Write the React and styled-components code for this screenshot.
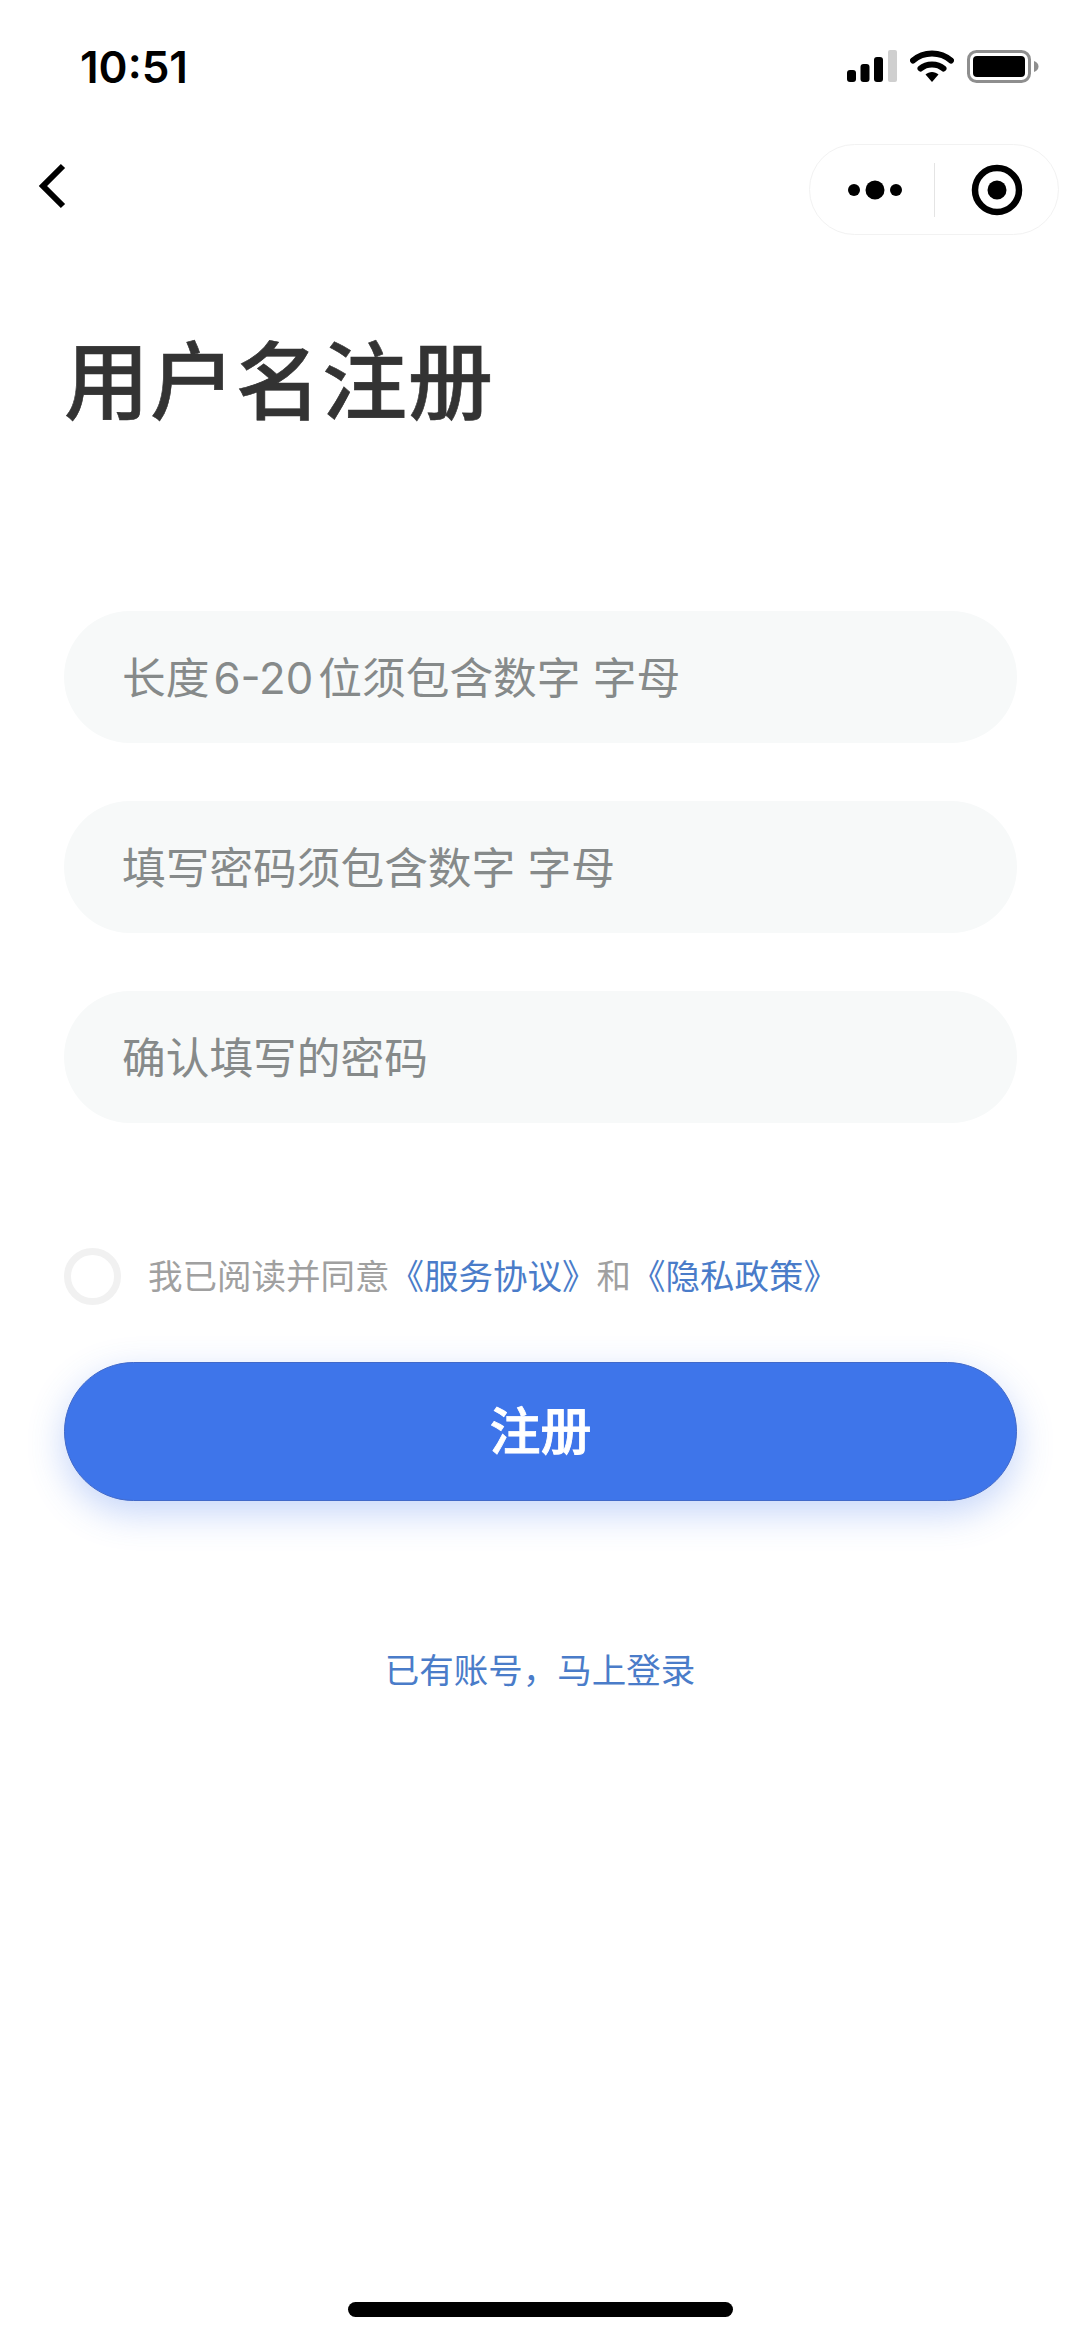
import React from 'react'
import styled, { createGlobalStyle } from 'styled-components'

const cjk = `Inter, "Noto Sans CJK SC", sans-serif`

const Global = createGlobalStyle`
  html, body { margin: 0; padding: 0; background: #fff; }
  * { box-sizing: border-box; }
`

const Page = styled.div`
  width: 1080px;
  height: 2339px;
  display: flex;
  flex-direction: column;
  background: #fff;
  font-family: ${cjk};
  overflow: hidden;
`

const StatusBar = styled.div`
  height: 134px;
  padding: 41px 41px 0 80px;
  display: flex;
  align-items: flex-start;
  justify-content: space-between;
`

const Time = styled.div`
  font-size: 44px;
  line-height: 52px;
  font-weight: 600;
  color: #000;
`

const StatusIcons = styled.div`
  display: flex;
  align-items: center;
  gap: 13px;
  padding-top: 8px;
`

const NavBar = styled.div`
  height: 111px;
  padding: 10px 21px 0 38px;
  display: flex;
  align-items: flex-start;
  justify-content: space-between;
`

const Back = styled.svg`
  width: 30px;
  height: 48px;
  margin-top: 18px;
`

const Capsule = styled.div`
  width: 250px;
  height: 91px;
  border: 1.5px solid #f2f2f2;
  border-radius: 46px;
  display: flex;
  align-items: center;
  background: #fff;
`

const CapsuleSide = styled.div`
  flex: 1;
  display: flex;
  align-items: center;
  justify-content: center;

  svg {
    margin-left: ${(p) => p.$shift || 0}px;
  }
`

const CapsuleDivider = styled.div`
  width: 1px;
  height: 54px;
  background: #e4e4e4;
`

const Title = styled.h1`
  margin: 78px 0 0 64px;
  font-size: 85px;
  line-height: 120px;
  font-weight: 500;
  letter-spacing: 1px;
  color: #333;
  -webkit-text-stroke: 0.6px #333;
`

const Form = styled.div`
  margin-top: 168px;
  padding: 0 63px 0 64px;
  display: flex;
  flex-direction: column;
  gap: 58px;
`

const Field = styled.div`
  height: 132px;
  padding: 0 0 4px 58px;
  display: flex;
  align-items: center;
  border-radius: 66px;
  background: #f7f9f9;
  font-size: 43.7px;
  color: #868a8a;
`

const Digits = styled.span`
  margin: 0 5px 0 4px;
`

const Agree = styled.div`
  margin-top: 124px;
  padding-left: 64px;
  display: flex;
  align-items: center;
  gap: 27px;
  height: 58px;
  font-size: 34.5px;
  color: #a0a0a0;
`

const AgreeText = styled.span`
  margin-bottom: 4px;
`

const Radio = styled.div`
  width: 57px;
  height: 57px;
  border: 7px solid #f1f1f1;
  border-radius: 50%;
`

const Link = styled.span`
  color: #4a7cc9;
`

const Submit = styled.div`
  margin: 57px 63px 0 64px;
  height: 139px;
  padding-bottom: 8px;
  border: 1px solid #4169c9;
  border-radius: 70px;
  display: flex;
  align-items: center;
  justify-content: center;
  background: #3e75ea;
  color: #fff;
  font-size: 51px;
  font-weight: 500;
  -webkit-text-stroke: 0.8px #fff;
  box-shadow: 0 12px 36px rgba(62, 117, 234, 0.3);
`

const LoginLink = styled.div`
  margin-top: 145px;
  text-align: center;
  font-size: 34.5px;
  line-height: 50px;
  color: #4a7cc9;
`

const HomeBar = styled.div`
  margin: auto auto 22px;
  width: 385px;
  height: 15px;
  border-radius: 8px;
  background: #000;
`

const SignalIcon = () => (
  <svg width="50" height="32" viewBox="0 0 50 32">
    <rect x="0" y="20" width="9" height="12" rx="3" fill="#000" />
    <rect x="13.5" y="14" width="9" height="18" rx="3" fill="#000" />
    <rect x="27" y="7" width="9" height="25" rx="3" fill="#000" />
    <rect x="41" y="0" width="9" height="32" rx="2" fill="#cfcfcf" />
  </svg>
)

const WifiIcon = () => (
  <svg width="44" height="34" viewBox="0 0 44 34">
    <path d="M3 11.5C13.5 2 30.5 2 41 11.5" fill="none" stroke="#000" strokeWidth="6" strokeLinecap="round" />
    <path d="M10.5 19.5C16.5 14 27.5 14 33.5 19.5" fill="none" stroke="#000" strokeWidth="6" strokeLinecap="round" />
    <path d="M15.5 25.5C19 22 25 22 28.5 25.5L22 33Z" fill="#000" />
  </svg>
)

const BatteryIcon = () => (
  <svg width="72" height="33" viewBox="0 0 72 33">
    <rect x="1.5" y="1.5" width="61" height="30" rx="8" fill="none" stroke="#8e8e8e" strokeWidth="3" />
    <rect x="6" y="6" width="52" height="21" rx="4" fill="#000" />
    <path d="M67 11C70 12 71.5 14 71.5 16.5C71.5 19 70 21 67 22Z" fill="#8e8e8e" />
  </svg>
)

const DotsIcon = () => (
  <svg width="54" height="20" viewBox="0 0 54 20">
    <circle cx="6" cy="10" r="6" fill="#000" />
    <circle cx="27" cy="10" r="9.5" fill="#000" />
    <circle cx="48" cy="10" r="6" fill="#000" />
  </svg>
)

const TargetIcon = () => (
  <svg width="52" height="52" viewBox="0 0 52 52">
    <circle cx="26" cy="26" r="22" fill="none" stroke="#000" strokeWidth="6.5" />
    <circle cx="26" cy="26" r="9.5" fill="#000" />
  </svg>
)

const App = () => {
  return (
    <Page>
      <Global />
      <StatusBar>
        <Time>10:51</Time>
        <StatusIcons>
          <SignalIcon />
          <WifiIcon />
          <BatteryIcon />
        </StatusIcons>
      </StatusBar>
      <NavBar>
        <Back viewBox="0 0 30 48">
          <path d="M25 4L5 24L25 44" fill="none" stroke="#000" strokeWidth="6" />
        </Back>
        <Capsule>
          <CapsuleSide $shift={7}><DotsIcon /></CapsuleSide>
          <CapsuleDivider />
          <CapsuleSide $shift={2}><TargetIcon /></CapsuleSide>
        </Capsule>
      </NavBar>
      <Title>用户名注册</Title>
      <Form>
        <Field><span>长度<Digits>6-20</Digits>位须包含数字 字母</span></Field>
        <Field>填写密码须包含数字 字母</Field>
        <Field>确认填写的密码</Field>
      </Form>
      <Agree>
        <Radio />
        <AgreeText>我已阅读并同意<Link>《服务协议》</Link>和<Link>《隐私政策》</Link></AgreeText>
      </Agree>
      <Submit>注册</Submit>
      <LoginLink>已有账号，马上登录</LoginLink>
      <HomeBar />
    </Page>
  )
}

export default App
